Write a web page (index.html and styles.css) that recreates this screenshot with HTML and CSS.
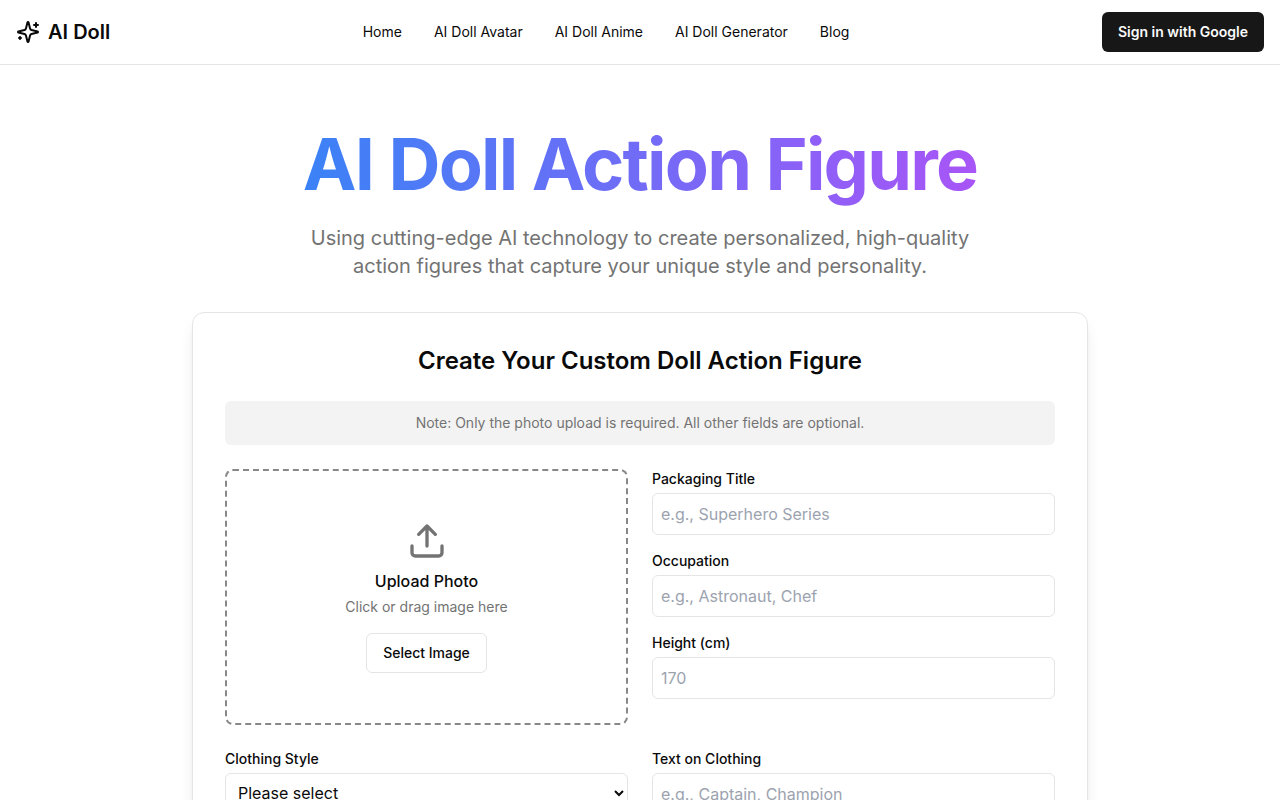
FILE: index.html
```html
<!DOCTYPE html>
<html lang="en">
	<head>
		<meta charset="utf-8">
		<meta name="viewport" content="width=device-width, initial-scale=1">
		<title>AI Doll</title>
		<link rel="stylesheet" href="styles.css">
	</head>

	<body>
		<header class="header">
			<a class="logo" href="#">
				<svg class="logo-icon" viewBox="0 0 24 24" fill="none" stroke="currentColor" stroke-width="2" stroke-linecap="round" stroke-linejoin="round" aria-hidden="true">
					<path d="M9.937 15.5A2 2 0 0 0 8.5 14.063l-6.135-1.582a.5.5 0 0 1 0-.962L8.5 9.936A2 2 0 0 0 9.937 8.5l1.582-6.135a.5.5 0 0 1 .963 0L14.063 8.5A2 2 0 0 0 15.5 9.937l6.135 1.581a.5.5 0 0 1 0 .964L15.5 14.063a2 2 0 0 0-1.437 1.437l-1.582 6.135a.5.5 0 0 1-.963 0z"/>
					<path d="M20 3v4M22 5h-4M4 17v2M5 18H3"/>
				</svg>
				<span>AI Doll</span>
			</a>
			<nav class="nav">
				<a href="#">Home</a>
				<a href="#">AI Doll Avatar</a>
				<a href="#">AI Doll Anime</a>
				<a href="#">AI Doll Generator</a>
				<a href="#">Blog</a>
			</nav>
			<button class="signin" type="button">Sign in with Google</button>
		</header>

		<main class="main">
			<h1 class="title">AI Doll Action Figure</h1>
			<p class="intro">Using cutting-edge AI technology to create personalized, high-quality action figures that capture your unique style and personality.</p>

			<form class="card">
				<h2 class="card-title">Create Your Custom Doll Action Figure</h2>
				<p class="note">Note: Only the photo upload is required. All other fields are optional.</p>

				<div class="columns">
					<div class="upload">
						<svg class="upload-icon" viewBox="0 0 24 24" fill="none" stroke="currentColor" stroke-width="2" stroke-linecap="round" stroke-linejoin="round" aria-hidden="true">
							<path d="M21 15v4a2 2 0 0 1-2 2H5a2 2 0 0 1-2-2v-4"/>
							<path d="M17 8l-5-5-5 5M12 3v12"/>
						</svg>
						<p class="upload-title">Upload Photo</p>
						<p class="upload-hint">Click or drag image here</p>
						<button class="select-image" type="button">Select Image</button>
					</div>

					<div class="fields">
						<div class="field">
							<label for="packaging">Packaging Title</label>
							<input type="text" id="packaging" placeholder="e.g., Superhero Series">
						</div>
						<div class="field">
							<label for="occupation">Occupation</label>
							<input type="text" id="occupation" placeholder="e.g., Astronaut, Chef">
						</div>
						<div class="field">
							<label for="height">Height (cm)</label>
							<input type="text" id="height" placeholder="170">
						</div>
					</div>

					<div class="field">
						<label for="clothing">Clothing Style</label>
						<select id="clothing">
							<option>Please select</option>
						</select>
					</div>
					<div class="field">
						<label for="clothingtext">Text on Clothing</label>
						<input type="text" id="clothingtext" placeholder="e.g., Captain, Champion">
					</div>
				</div>
			</form>
		</main>
	</body>
</html>
```

FILE: styles.css
```css
*{
	box-sizing:border-box;
}
body{
	margin:0;
	font-family:Inter, "Liberation Sans", sans-serif;
	font-size:16px;
	line-height:24px;
	color:#0a0a0a;
	background-color:#fff;
}
h1, h2, p{
	margin:0;
}
a{
	color:inherit;
	text-decoration:none;
}
button, input, select{
	font-family:inherit;
	color:inherit;
}
button{
	cursor:pointer;
}

/* header */
.header{
	display:flex;
	align-items:center;
	justify-content:space-between;
	height:64px;
	padding:0 16px;
	box-shadow:0 1px 0 #e5e5e5;
}
.logo{
	display:flex;
	align-items:center;
	gap:8px;
	font-size:20px;
	font-weight:600;
	line-height:28px;
}
.logo-icon{
	width:24px;
	height:24px;
}
.nav{
	display:flex;
	gap:32px;
	font-size:14px;
	line-height:20px;
}
.signin{
	height:40px;
	padding:0 16px;
	border:0;
	border-radius:6px;
	font-size:14px;
	font-weight:600;
	line-height:20px;
	color:#fafafa;
	background-color:#171717;
}

/* intro */
.main{
	max-width:928px;
	margin:0 auto;
	padding:64px 16px;
	text-align:center;
}
.title{
	width:fit-content;
	margin:0 auto 16px;
	padding-bottom:8px;
	font-size:72px;
	font-weight:700;
	line-height:72px;
	letter-spacing:-0.025em;
	color:transparent;
	background-image:linear-gradient(to right, #3b82f6, #a855f7);
	-webkit-background-clip:text;
	background-clip:text;
}
.intro{
	max-width:672px;
	margin:0 auto 32px;
	font-size:20px;
	line-height:28px;
	color:#737373;
}

/* form */
.card{
	padding:32px;
	border:1px solid #e5e5e5;
	border-radius:12px;
	box-shadow:0 10px 15px -3px rgba(0,0,0,0.1), 0 4px 6px -4px rgba(0,0,0,0.1);
}
.card-title{
	margin-bottom:24px;
	font-size:24px;
	font-weight:600;
	line-height:32px;
}
.note{
	margin-bottom:24px;
	padding:12px;
	border-radius:6px;
	font-size:14px;
	line-height:20px;
	color:#737373;
	background-color:#f3f3f3;
}
.columns{
	display:grid;
	grid-template-columns:1fr 1fr;
	gap:24px;
}
.upload{
	display:flex;
	flex-direction:column;
	align-items:center;
	justify-content:center;
	min-height:256px;
	border:2px dashed #888;
	border-radius:8px;
}
.upload-icon{
	width:40px;
	height:40px;
	margin-bottom:8px;
	color:#737373;
}
.upload-title{
	margin-bottom:4px;
	font-weight:500;
}
.upload-hint{
	margin-bottom:16px;
	font-size:14px;
	line-height:20px;
	color:#737373;
}
.select-image{
	height:40px;
	padding:0 16px;
	border:1px solid #e5e5e5;
	border-radius:6px;
	font-size:14px;
	font-weight:500;
	line-height:20px;
	background-color:#fff;
}
.fields{
	display:flex;
	flex-direction:column;
	gap:16px;
}
.field{
	text-align:left;
}
.field label{
	display:block;
	margin-bottom:4px;
	font-size:14px;
	font-weight:500;
	line-height:20px;
}
.field input, .field select{
	width:100%;
	height:42px;
	padding:8px;
	border:1px solid #e5e5e5;
	border-radius:6px;
	font-size:16px;
	background-color:#fff;
}
.field select{
	height:40px;
}
.field input::placeholder{
	color:#9ca3af;
}
```
